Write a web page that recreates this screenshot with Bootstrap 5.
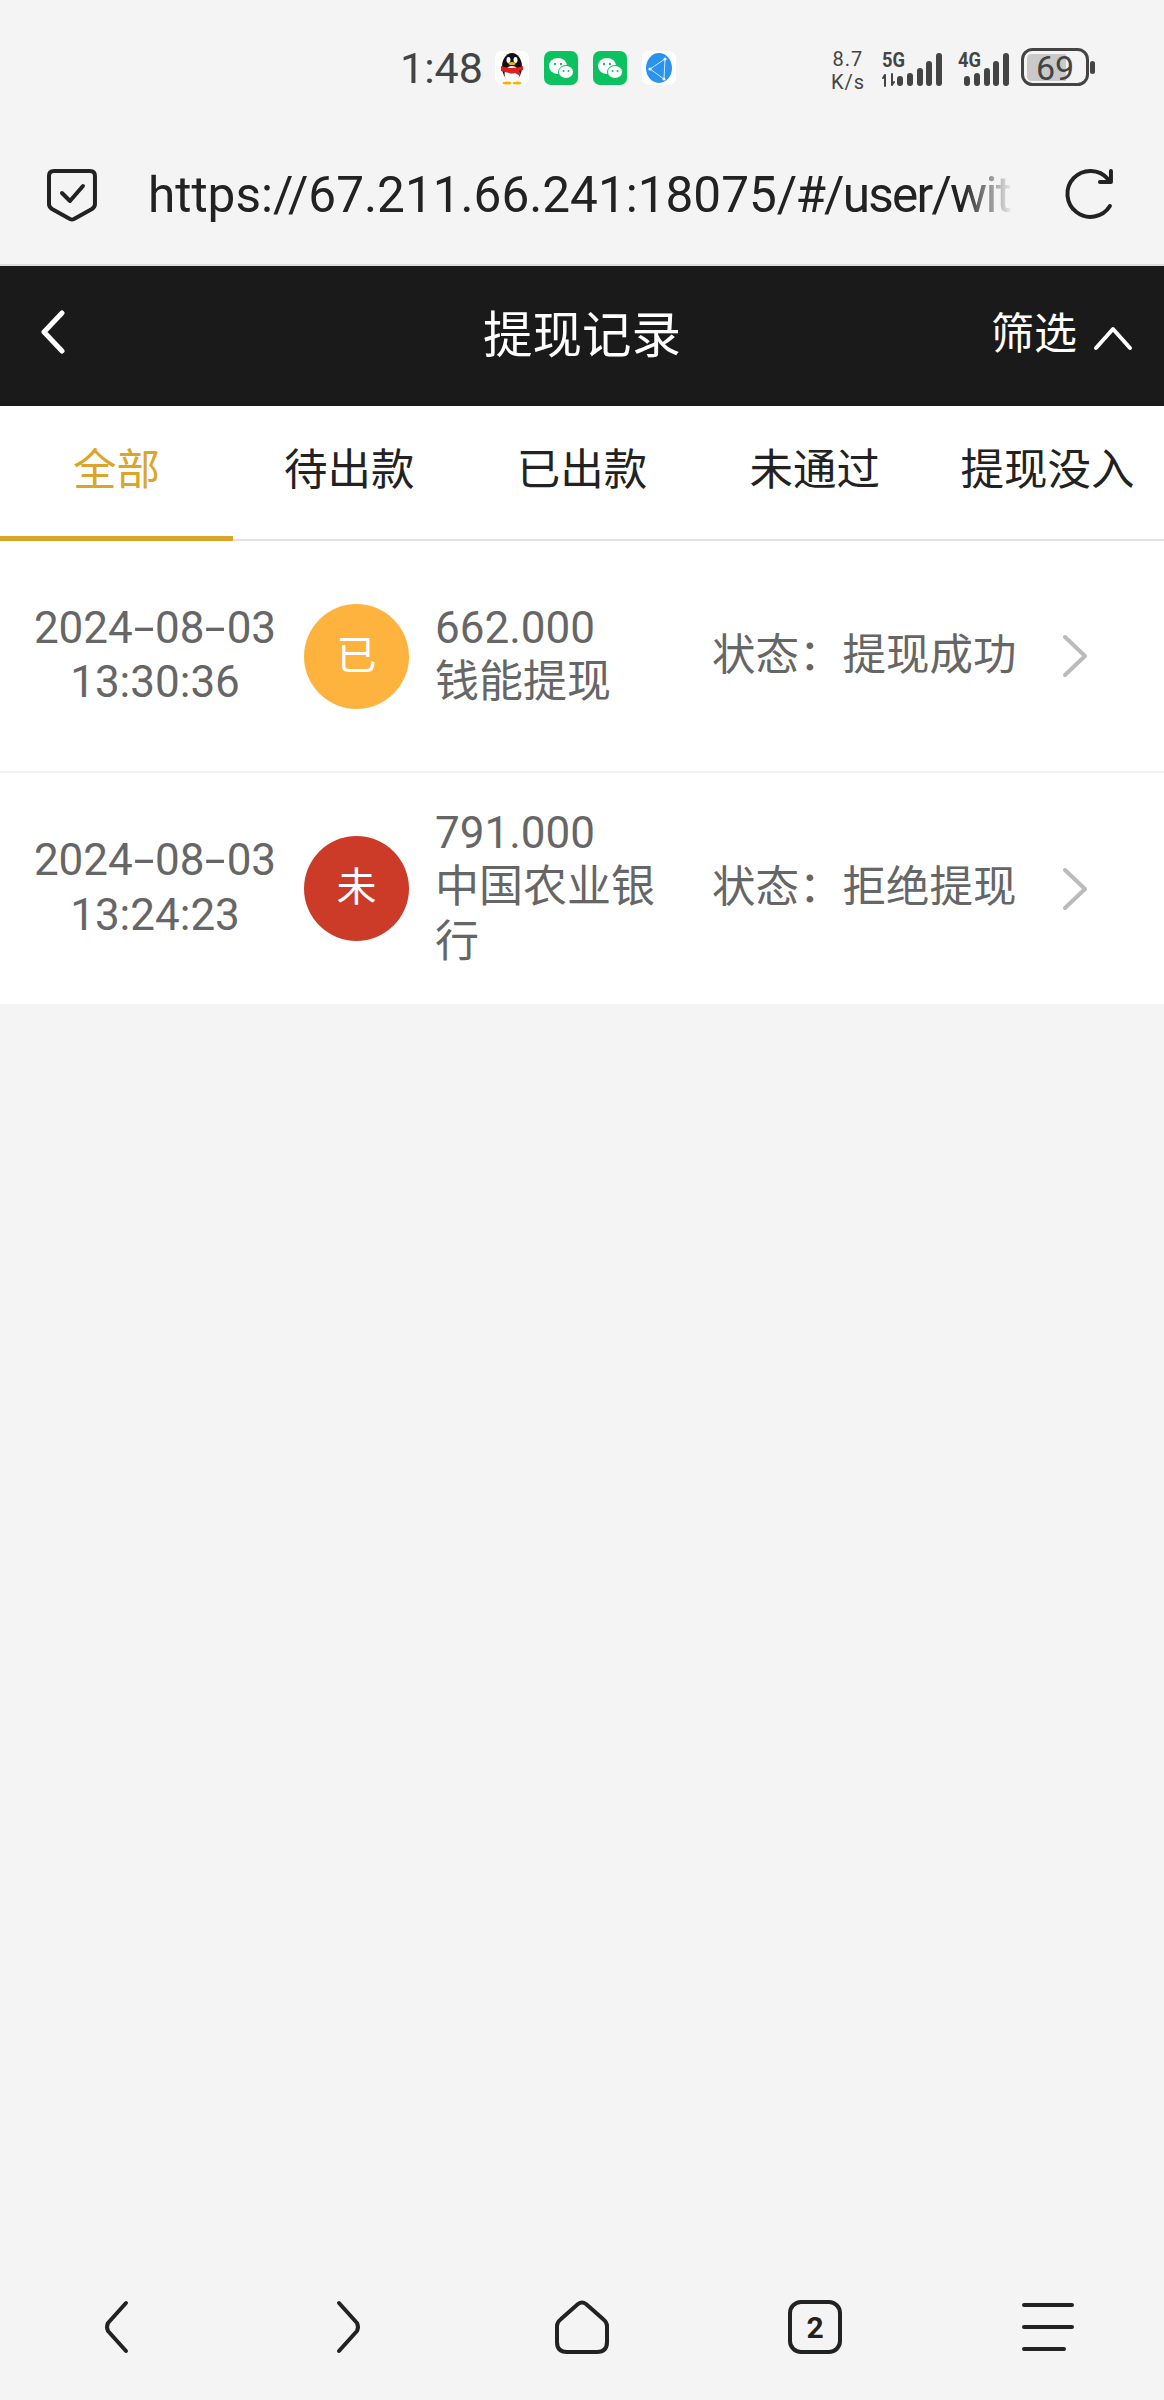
<!DOCTYPE html>
<html lang="zh">
<head>
    <meta charset="UTF-8">
    <meta name="viewport" content="width=device-width, initial-scale=1.0">
    <title>提现记录</title>
    <link href="https://cdn.jsdelivr.net/npm/bootstrap@5.3.0/dist/css/bootstrap.min.css" rel="stylesheet">
    <style>
        body {
            min-height: 2400px;
            background-color: #f4f4f4;
            font-family: Roboto, "Noto Sans CJK SC", sans-serif;
            color: #222;
        }

        /* phone status bar */
        .phone-status { height: 135px; padding-left: 400px; padding-right: 69px; padding-top: 48px; align-items: flex-start; color: #444; }
        .phone-time { font-size: 43px; line-height: 40px; width: 95px; }
        .app-icon { width: 34px; height: 34px; margin-right: 15px; margin-top: 3px; }
        .net-speed { font-size: 20px; line-height: 23px; letter-spacing: 1px; text-align: center; width: 36px; margin-right: 16px; }
        .sig-five { margin-right: 15px; }
        .sig-four { margin-right: 12px; }

        /* browser address bar */
        .addr-bar { height: 131px; border-bottom: 2px solid #ddd; padding-left: 46px; padding-right: 46px; padding-bottom: 9px; }
        .addr-url {
            width: 867px;
            margin-left: 50px;
            margin-right: 50px;
            font-size: 49.5px;
            line-height: 60px;
            white-space: nowrap;
            color: #222;
            -webkit-mask-image: linear-gradient(to right, #000 94%, transparent 100%);
            mask-image: linear-gradient(to right, #000 94%, transparent 100%);
        }
        .addr-tail { letter-spacing: -1.8px; }

        /* page header */
        .page-head { height: 140px; background-color: #1a1a1a; color: #fff; padding-left: 40px; padding-right: 31px; }
        .page-title { font-size: 49.5px; line-height: 60px; position: absolute; left: 0; right: 0; text-align: center; }
        .filter-btn { font-size: 43px; line-height: 50px; }

        /* tabs */
        .tab-strip { height: 135px; background-color: #fff; border-bottom: 2px solid #e2e2e2; }
        .tab-cell { flex: 1 1 0; font-size: 43.5px; line-height: 130px; height: 135px; text-align: center; color: #222; white-space: nowrap; }
        .tab-cell.is-active { color: #dca428; border-bottom: 5px solid #dca428; }

        /* records */
        .record-row { height: 232px; background-color: #fff; color: #666; padding-left: 30px; border-bottom: 2px solid #f1f1f1; font-size: 44px; line-height: 54.5px; }
        .record-row:last-child { border-bottom: 0; height: 231px; }
        .record-date { width: 250px; padding-bottom: 2px; text-align: center; white-space: nowrap; }
        .date-sep { display: inline-block; transform: scaleX(1.7); margin: 0 5px; }
        .record-mark { width: 105px; height: 105px; margin-left: 24px; margin-right: 26px; color: #fff; font-size: 40px; }
        .mark-done { background-color: #ffb33f; }
        .mark-fail { background-color: #cc3b28; }
        .record-info { width: 240px; padding-bottom: 2px; margin-right: 37px; }
        .record-state { width: 347px; font-size: 43.5px; white-space: nowrap; margin-right: 3px; }

        /* browser bottom bar */
        .browser-nav { height: 144px; padding-bottom: 2px; }
        .browser-nav > div { flex: 1 1 0; text-align: center; }
        svg { display: block; }
    </style>
</head>
<body class="d-flex flex-column">
    <!-- Status bar -->
    <div class="phone-status d-flex">
        <div class="phone-time">1:48</div>
        <svg class="app-icon" viewBox="0 0 34 34">
            <rect width="34" height="34" rx="7" fill="#fff"/>
            <ellipse cx="17" cy="16" rx="10" ry="14" fill="#111"/>
            <ellipse cx="17" cy="23" rx="7.5" ry="8" fill="#fff"/>
            <ellipse cx="13.5" cy="9" rx="2" ry="3" fill="#fff"/>
            <ellipse cx="20.5" cy="9" rx="2" ry="3" fill="#fff"/>
            <path d="M6 15q11 4 22 0v4l-4 1 1 5-5-3q-3 1-6 0l-8-2z" fill="#e02020"/>
            <ellipse cx="17" cy="12.5" rx="3.5" ry="1.6" fill="#f5b400"/>
            <ellipse cx="12" cy="32" rx="4.5" ry="1.6" fill="#f5b400"/>
            <ellipse cx="22" cy="32" rx="4.5" ry="1.6" fill="#f5b400"/>
        </svg>
        <svg class="app-icon" viewBox="0 0 34 34">
            <rect width="34" height="34" rx="7" fill="#0cc160"/>
            <ellipse cx="14" cy="15" rx="9" ry="8" fill="#fff"/>
            <ellipse cx="22" cy="21" rx="7.5" ry="6.5" fill="#fff" stroke="#0cc160"/>
            <circle cx="11" cy="13" r="1.2" fill="#0cc160"/><circle cx="17" cy="13" r="1.2" fill="#0cc160"/>
            <circle cx="19.5" cy="20" r="1" fill="#0cc160"/><circle cx="24.5" cy="20" r="1" fill="#0cc160"/>
        </svg>
        <svg class="app-icon" viewBox="0 0 34 34">
            <rect width="34" height="34" rx="7" fill="#0cc160"/>
            <ellipse cx="14" cy="15" rx="9" ry="8" fill="#fff"/>
            <ellipse cx="22" cy="21" rx="7.5" ry="6.5" fill="#fff" stroke="#0cc160"/>
            <circle cx="11" cy="13" r="1.2" fill="#0cc160"/><circle cx="17" cy="13" r="1.2" fill="#0cc160"/>
            <circle cx="19.5" cy="20" r="1" fill="#0cc160"/><circle cx="24.5" cy="20" r="1" fill="#0cc160"/>
        </svg>
        <svg class="app-icon" viewBox="0 0 34 34">
            <rect width="34" height="34" rx="7" fill="#fff"/>
            <ellipse cx="17" cy="17" rx="13" ry="15" fill="#2a93ee"/>
            <path d="M23 8 8 18l14 10M23 8l-1 20" fill="none" stroke="#cfe8fb" stroke-width="1"/>
            <circle cx="23" cy="8" r="1.6" fill="#e8f5ff"/><circle cx="8" cy="18" r="1.6" fill="#e8f5ff"/><circle cx="22" cy="28" r="1.6" fill="#e8f5ff"/>
        </svg>
        <div class="ms-auto d-flex align-items-start">
            <div class="net-speed">8.7<br>K/s</div>
            <svg class="sig-five" width="61" height="40" viewBox="0 -4 61 40">
                <text x="0" y="15" font-size="20" font-weight="700" font-family="Roboto" fill="#444" textLength="23" lengthAdjust="spacingAndGlyphs">5G</text>
                <path d="M3 34V23M3 23l-2 3M10 22v11M10 33l2-3" fill="none" stroke="#444" stroke-width="2" stroke-linecap="round"/>
                <g fill="#444"><rect x="15" y="24" width="6" height="10" rx="3"/><rect x="25" y="21" width="6" height="13" rx="3"/><rect x="35" y="16" width="6" height="18" rx="3"/><rect x="44" y="9" width="6" height="25" rx="3"/><rect x="54" y="1" width="6" height="33" rx="3"/></g>
            </svg>
            <svg class="sig-four" width="51" height="40" viewBox="0 -4 51 40">
                <text x="0" y="15" font-size="20" font-weight="700" font-family="Roboto" fill="#444" textLength="23" lengthAdjust="spacingAndGlyphs">4G</text>
                <g fill="#444"><rect x="6" y="24" width="6" height="10" rx="3"/><rect x="16" y="21" width="6" height="13" rx="3"/><rect x="26" y="16" width="6" height="18" rx="3"/><rect x="35" y="9" width="6" height="25" rx="3"/><rect x="45" y="1" width="6" height="33" rx="3"/></g>
            </svg>
            <svg width="74" height="39" viewBox="0 0 74 39">
                <rect x="1.5" y="1.5" width="65" height="35" rx="10" fill="#f4f4f4" stroke="#444" stroke-width="3"/>
                <path d="M6 11q0-5 5-5h34v27H11q-5 0-5-5z" fill="#c9c9c9"/>
                <text x="34" y="32" font-size="34" font-family="Roboto" text-anchor="middle" fill="#444">69</text>
                <rect x="69" y="13" width="5" height="13" rx="2.5" fill="#444"/>
            </svg>
        </div>
    </div>

    <!-- Address bar -->
    <div class="addr-bar d-flex align-items-center">
        <svg width="52" height="54" viewBox="0 0 52 54" fill="none" stroke="#222" stroke-width="4" stroke-linejoin="round" stroke-linecap="round">
            <path d="M8 3h36q5 0 5 5v28q0 3-3 5L28 51q-2 1-4 0L6 41q-3-2-3-5V8q0-5 5-5z"/>
            <path d="M16 25l8 8 13-15"/>
        </svg>
        <div class="addr-url">https://67.211.66.241:18075<span class="addr-tail">/#/user/wit</span></div>
        <svg width="54" height="54" viewBox="0 0 54 54" fill="none" stroke="#222" stroke-width="4" stroke-linecap="round" stroke-linejoin="round">
            <path d="M46 38A23 23 0 1 1 44 11"/>
            <path d="M47 3v11H36"/>
        </svg>
    </div>

    <!-- Page header -->
    <div class="page-head d-flex align-items-center justify-content-between position-relative">
        <svg width="26" height="44" viewBox="0 0 26 44" fill="none" stroke="#fff" stroke-width="5" stroke-linecap="round" stroke-linejoin="round" class="mb-2">
            <path d="M22 3 4 22l18 19"/>
        </svg>
        <div class="page-title">提现记录</div>
        <div class="filter-btn d-flex align-items-center position-relative mb-1">
            <span>筛选</span>
            <svg width="40" height="26" viewBox="0 0 40 26" fill="none" stroke="#fff" stroke-width="4" stroke-linecap="round" stroke-linejoin="round" class="ms-3 mt-2">
                <path d="M3 23 20 4l17 19"/>
            </svg>
        </div>
    </div>

    <!-- Tabs -->
    <div class="tab-strip d-flex">
        <div class="tab-cell is-active">全部</div>
        <div class="tab-cell">待出款</div>
        <div class="tab-cell">已出款</div>
        <div class="tab-cell">未通过</div>
        <div class="tab-cell">提现没入</div>
    </div>

    <!-- Records -->
    <div>
        <div class="record-row d-flex align-items-center">
            <div class="record-date">2024<span class="date-sep">-</span>08<span class="date-sep">-</span>03<br>13:30:36</div>
            <div class="record-mark mark-done rounded-circle d-flex align-items-center justify-content-center">已</div>
            <div class="record-info">662.000<br>钱能提现</div>
            <div class="record-state">状态：提现成功</div>
            <svg width="26" height="44" viewBox="0 0 26 44" fill="none" stroke="#bbb" stroke-width="4" stroke-linecap="round" stroke-linejoin="round"><path d="M3 3l20 19L3 41"/></svg>
        </div>
        <div class="record-row d-flex align-items-center">
            <div class="record-date">2024<span class="date-sep">-</span>08<span class="date-sep">-</span>03<br>13:24:23</div>
            <div class="record-mark mark-fail rounded-circle d-flex align-items-center justify-content-center">未</div>
            <div class="record-info">791.000<br>中国农业银行</div>
            <div class="record-state">状态：拒绝提现</div>
            <svg width="26" height="44" viewBox="0 0 26 44" fill="none" stroke="#bbb" stroke-width="4" stroke-linecap="round" stroke-linejoin="round"><path d="M3 3l20 19L3 41"/></svg>
        </div>
    </div>

    <!-- Browser bottom bar -->
    <div class="browser-nav d-flex align-items-center mt-auto">
        <div><svg class="mx-auto" width="26" height="54" viewBox="0 0 26 54" fill="none" stroke="#222" stroke-width="4" stroke-linecap="round" stroke-linejoin="round"><path d="M23 3 5 23q-2 4 0 8l18 20"/></svg></div>
        <div><svg class="mx-auto" width="26" height="54" viewBox="0 0 26 54" fill="none" stroke="#222" stroke-width="4" stroke-linecap="round" stroke-linejoin="round"><path d="M3 3l18 20q2 4 0 8L3 51"/></svg></div>
        <div><svg class="mx-auto" width="54" height="54" viewBox="0 0 54 54" fill="none" stroke="#222" stroke-width="4" stroke-linejoin="round"><path d="M23 4q4-3 8 0l17 15q4 3 4 7v16q0 10-10 10H12Q2 52 2 42V26q0-4 4-7z"/></svg></div>
        <div><svg class="mx-auto" width="54" height="54" viewBox="0 0 54 54"><rect x="2" y="2" width="50" height="50" rx="11" fill="none" stroke="#222" stroke-width="4"/><text x="27" y="38" font-size="30" font-weight="700" font-family="Roboto" text-anchor="middle" fill="#222">2</text></svg></div>
        <div><svg class="mx-auto" width="52" height="50" viewBox="0 0 52 50" stroke="#222" stroke-width="4" stroke-linecap="round"><path d="M2 3h48M2 25h48M2 47h40"/></svg></div>
    </div>
</body>
</html>
